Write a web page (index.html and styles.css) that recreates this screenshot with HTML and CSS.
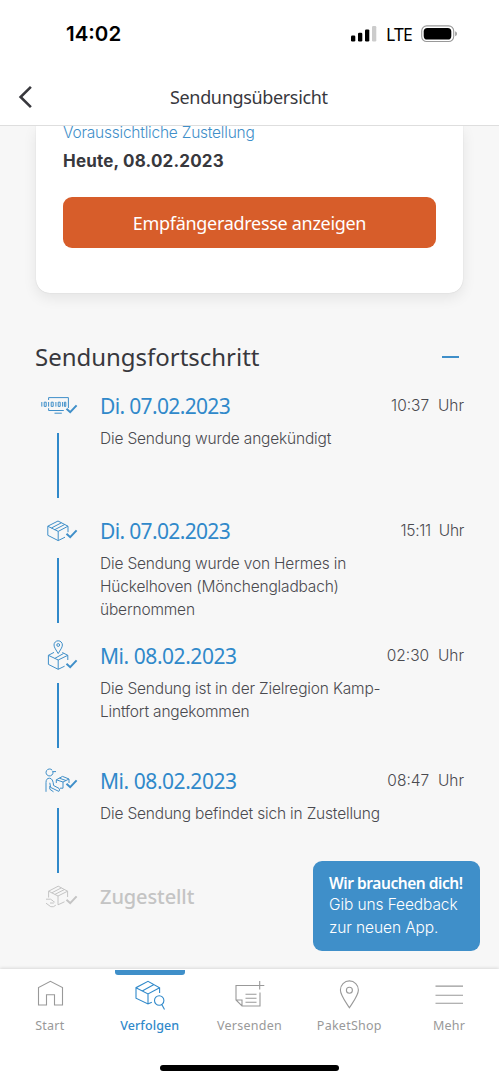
FILE: index.html
```html
<!DOCTYPE html>
<html lang="de">
<head>
    <meta charset="UTF-8">
    <title>Sendungsübersicht</title>
    <link rel="stylesheet" href="styles.css">
</head>
<body>
    <div class="statusbar">
        <span class="clock">14:02</span>
        <div class="status-icons">
            <svg width="26" height="16" viewBox="0 0 26 16">
                <rect x="0" y="9.5" width="4.3" height="6" rx="1.2"/>
                <rect x="7" y="6.7" width="4.3" height="8.8" rx="1.2"/>
                <rect x="14" y="3.4" width="4.3" height="12.1" rx="1.2"/>
                <rect x="21" y="0" width="4.3" height="15.5" rx="1.2" fill="#ccc"/>
            </svg>
            <span class="lte">LTE</span>
            <svg width="37" height="18" viewBox="0 0 37 18">
                <rect x="0.7" y="0.9" width="32" height="15.6" rx="5" fill="none" stroke="#999" stroke-width="1.1"/>
                <rect x="2.7" y="2.9" width="27.6" height="11.6" rx="3.6"/>
                <path d="M34.2 6.2 Q36 7 36 8.8 Q36 10.6 34.2 11.3Z" fill="#999"/>
            </svg>
        </div>
    </div>
    <div class="header">
        <svg class="back" width="14" height="24" viewBox="0 0 14 24"><path d="M12.9 1.8 L2.6 12 L12.9 22.2"/></svg>
        <h1>Sendungsübersicht</h1>
    </div>
    <div class="main">
        <div class="card">
            <p class="label">Voraussichtliche Zustellung</p>
            <p class="date">Heute, 08.02.2023</p>
            <button type="button">Empfängeradresse anzeigen</button>
        </div>
        <div class="section-title">
            <h2>Sendungsfortschritt</h2>
            <span class="minus"></span>
        </div>
        <div class="step">
            <div class="track">
                <svg class="icon" width="40" height="32" viewBox="0 0 40 32">
                    <path d="M9.6 10 V7.6 H29.4 V18 M9.6 18.2 V20.5 H24.8 M15.5 23.2 H22.8"/>
                    <path d="M2.8 12 V16.6 M9.6 12 V16.6 M16.9 12 V16.6 M23.6 12 V16.6 M5.2 12.2 H7.2 V16.4 H5.2Z M12.2 12.2 H14.2 V16.4 H12.2Z M19.2 12.2 H21.2 V16.4 H19.2Z M25.4 12.2 H26.8 V16.4 H25.4Z"/>
                    <path class="check" d="M27.5 18.7 L31.2 22.2 L37.6 15.4"/>
                </svg>
                <span class="line"></span>
            </div>
            <div class="info">
                <div class="row"><h3 class="tight">Di. 07.02.2023</h3><span class="time">10:37&nbsp; Uhr</span></div>
                <p>Die Sendung wurde angekündigt</p>
            </div>
        </div>
        <div class="step">
            <div class="track">
                <svg class="icon" width="40" height="32" viewBox="0 0 40 32">
                    <path d="M29 17.2 V11.2 L19 6 L8.8 11.2 V20.3 L19.2 25.6 L26 22.2 M8.8 11.2 L19.2 16.4 L29 11.2 M19.2 16.4 V25.6 M12.4 13 L22.4 7.8 M15.7 14.7 L25.9 9.4"/>
                    <path class="check" d="M27.5 18.7 L31.2 22.2 L37.6 15.4"/>
                </svg>
                <span class="line"></span>
            </div>
            <div class="info">
                <div class="row"><h3 class="tight">Di. 07.02.2023</h3><span class="time tight">15:11&nbsp; Uhr</span></div>
                <p>Die Sendung wurde von Hermes in<br>Hückelhoven (Mönchengladbach)<br>übernommen</p>
            </div>
        </div>
        <div class="step">
            <div class="track">
                <svg class="icon" width="40" height="32" viewBox="0 0 40 32">
                    <path d="M19.2 13.6 C17.2 10 15 7.4 15 5 A4.2 4.2 0 0 1 23.4 5 C23.4 7.4 21.2 10 19.2 13.6Z"/>
                    <circle cx="19.2" cy="5" r="1.4"/>
                    <path d="M15 12.4 L9.4 15.3 V24.4 L19.2 29.3 L25.6 26.2 M9.4 15.3 L19.2 20 L28.8 15.3 V20 M19.2 20 V29.3 M28.8 15.3 L23.3 12.5 M15.8 18.4 L24.5 13.5"/>
                    <path class="check" d="M27.5 23.7 L31.2 27.2 L37.6 20.4"/>
                </svg>
                <span class="line"></span>
            </div>
            <div class="info">
                <div class="row"><h3>Mi. 08.02.2023</h3><span class="time">02:30&nbsp; Uhr</span></div>
                <p>Die Sendung ist in der Zielregion Kamp-<br>Lintfort angekommen</p>
            </div>
        </div>
        <div class="step last-done">
            <div class="track">
                <svg class="icon" width="40" height="32" viewBox="0 0 40 32">
                    <path d="M14 7 A3.5 3.5 0 1 1 13.2 5.2 M13.2 6.6 H17"/>
                    <path d="M7 26.8 V17.5 Q7 13.2 10.5 13.2 Q14 13.2 14.6 20.5 L20 23.4 Q21.3 25 19.8 26.4 L11.6 22.4 L10.8 17.8 M10.8 21 V24.2 L14.5 26.8"/>
                    <path d="M17.3 14.8 L23.5 11.4 L30 14 L24 17 L17.3 14.8 V18 M24 17 V23.2 H21 M30 14 V18 M20.4 13.2 L27 15.5"/>
                    <path class="check" d="M27.5 18.7 L31.2 22.2 L37.6 15.4"/>
                </svg>
                <span class="line"></span>
            </div>
            <div class="info">
                <div class="row"><h3>Mi. 08.02.2023</h3><span class="time">08:47&nbsp; Uhr</span></div>
                <p>Die Sendung befindet sich in Zustellung</p>
            </div>
        </div>
        <div class="step pending">
            <div class="track">
                <svg class="icon" width="40" height="32" viewBox="0 0 40 32">
                    <path d="M9.6 16.5 V10.2 L19.2 5.2 L28.6 10.2 V16 M9.6 10.2 L19 15 L28.6 10.2 M19 15 V23.8 L25.5 20.8 M12.8 11.8 L22.3 6.9 M15.9 13.4 L25.5 8.5"/>
                    <path d="M7 18.2 H11.5 L14.2 20 Q16.4 21.4 14.5 22 H11 M7 22.2 L11.8 25.7 H14.4 L16.8 24.2"/>
                    <path class="check" d="M27.5 18.7 L31.2 22.2 L37.6 15.4"/>
                </svg>
            </div>
            <h3>Zugestellt</h3>
        </div>
        <div class="feedback">
            <b>Wir brauchen dich!</b>
            <p>Gib uns Feedback<br>zur neuen App.</p>
        </div>
    </div>
    <div class="nav">
        <a>
            <svg width="34" height="34" viewBox="0 0 34 34"><path d="M5.5 29 V11.5 L17.4 5.3 L29.5 11.5 V29 H21.5 V18.8 H13.5 V29Z"/></svg>
            <span>Start</span>
        </a>
        <a class="active">
            <svg width="34" height="34" viewBox="0 0 34 34">
                <path d="M26.6 17 V11.7 L15 5.3 L3 11.7 V22.2 L15 28 L18.8 26.3 M3 11.7 L15 18 L26.6 11.7 M15 18 V28 M9.2 15 L21 8.6"/>
                <circle cx="26.2" cy="24.5" r="4.7"/>
                <path d="M28.8 28.6 L31.5 33.5"/>
            </svg>
            <span>Verfolgen</span>
        </a>
        <a>
            <svg width="34" height="34" viewBox="0 0 34 34">
                <path d="M24.2 9.5 H4 V24 L10 30 H28 V16.5 M4 24 H10 V30 M13.5 18.3 H24.5 M13.5 22.3 H24.5 M13.5 26.3 H24.5 M27.7 5 V13.5 M23 9.5 H32.3"/>
            </svg>
            <span>Versenden</span>
        </a>
        <a>
            <svg width="34" height="34" viewBox="0 0 34 34">
                <path d="M17.4 31.8 C13.4 25.4 8.4 19 8.4 13.9 A9 9 0 0 1 26.4 13.9 C26.4 19 21.4 25.4 17.4 31.8Z"/>
                <circle cx="17.4" cy="14.2" r="3"/>
            </svg>
            <span>PaketShop</span>
        </a>
        <a>
            <svg width="34" height="34" viewBox="0 0 34 34"><path d="M3.5 10.1 H31 M3.5 19.2 H31 M3.5 27.3 H31"/></svg>
            <span>Mehr</span>
        </a>
        <div class="home-bar"></div>
    </div>
</body>
</html>
```
FILE: styles.css
```css
* { margin: 0; padding: 0; box-sizing: border-box; }
body { display: flex; flex-direction: column; width: 499px; height: 1080px; overflow: hidden; background: #f7f7f7; color: #38383d; font-family: "Noto Sans", sans-serif; }
h1, h2, h3 { font-weight: 400; white-space: nowrap; }
svg { display: block; flex: none; }

.statusbar { display: flex; justify-content: space-between; flex: none; height: 69px; padding: 22px 41px 0 66px; background: white; color: black; }
.clock { font: 600 20.5px/24px Inter, sans-serif; }
.status-icons { display: flex; align-items: center; height: 24px; }
.lte { width: 25px; margin: 0 10px 0 9px; font: 400 17.5px/24px "Noto Sans", sans-serif; letter-spacing: -0.8px; }
.header { display: flex; align-items: center; flex: none; height: 57px; padding: 0 171px 0 18px; background: white; border-bottom: 1px solid #dedede; }
.back path { fill: none; stroke: #38383d; stroke-width: 2.6; }
.header h1 { flex: 1; margin-left: 138px; font-size: 18px; letter-spacing: -0.34px; }

.main { flex: 1; position: relative; padding: 0 36px; min-height: 0; }
.card { height: 167px; margin-bottom: 40px; padding: 0 27px; background: white; border-radius: 0 0 14px 14px; box-shadow: 0 5px 14px rgba(0,0,0,0.08), 0 0 1px rgba(0,0,0,0.2); clip-path: inset(0 -30px -30px -30px); }
.card p { white-space: nowrap; }
.label { height: 18px; font: 300 15.5px/14px Inter, sans-serif; letter-spacing: -0.22px; color: #3f8fc9; }
.date { height: 28px; margin-top: 3px; font: 700 17px/28px Inter, sans-serif; letter-spacing: 0.18px; }
.card button { display: block; width: 373px; height: 51px; margin-top: 22px; border: none; border-radius: 9px; background: #d75d2a; color: white; font: 400 18px "Noto Sans", sans-serif; letter-spacing: -0.3px; }
.section-title { display: flex; justify-content: space-between; align-items: center; height: 45px; margin: 0 0 3px -1px; padding: 2px 4px 0 0; }
.section-title h2 { margin-top: -1px; font-size: 24px; letter-spacing: -0.02px; }
.minus { width: 17px; height: 2px; background: #3f8fc9; }

.step { display: flex; height: 125px; padding-top: 9px; }
.track { display: flex; flex-direction: column; flex: none; width: 64px; }
.icon { margin-left: 3px; overflow: visible; fill: none; stroke: #3f8fc9; stroke-width: 1; }
.icon .check { stroke-width: 2; }
.line { flex: none; width: 2.4px; height: 65px; margin: 11px 0 0 21px; background: #3089ca; }
.info { flex: 1; }
.row { display: flex; justify-content: space-between; align-items: center; height: 32px; margin-right: -1px; }
.step h3 { font-size: 21px; line-height: 32px; letter-spacing: -0.45px; color: #3089ca; }
.step h3.tight { letter-spacing: -0.65px; }
.time { font: 300 15.5px/32px Inter, sans-serif; color: #4a4a4f; }
.time.tight { letter-spacing: -0.33px; }
.info p { margin-top: 5px; font: 300 15.5px/23.2px Inter, sans-serif; letter-spacing: -0.18px; white-space: nowrap; color: #4a4a4f; }
.step.last-done { height: 116px; }
.step.pending { height: 50px; }
.pending .icon { stroke: #c4c4c4; }
.step.pending h3 { font-weight: 500; font-size: 20px; letter-spacing: -0.1px; color: #c4c4c4; }

.feedback { position: absolute; left: 313px; top: 735px; width: 167px; height: 90px; padding: 12px 16px; border-radius: 9px; background: #3f8fc9; color: white; white-space: nowrap; }
.feedback b { display: block; font-size: 15.5px; line-height: 20px; font-weight: 600; letter-spacing: -0.45px; }
.feedback p { font: 300 15.5px/23.4px Inter, sans-serif; letter-spacing: -0.1px; }

.nav { display: flex; flex: none; position: relative; height: 111px; background: white; box-shadow: 0 -1px 3px rgba(0,0,0,0.12); }
.nav a { flex: 1; display: flex; flex-direction: column; align-items: center; padding-top: 7px; color: #999; font-size: 12.5px; }
.nav svg { overflow: visible; fill: none; stroke: #999; stroke-width: 1.1; }
.nav span { margin-top: 6px; line-height: 20px; letter-spacing: 0.25px; }
.nav a.active { position: relative; color: #3089ca; font-weight: 500; }
.nav .active span { letter-spacing: 0.1px; }
.nav .active svg { stroke: #3089ca; }
.active::before { content: ""; position: absolute; top: 1px; left: 15px; width: 70px; height: 5px; border-radius: 0 0 3px 3px; background: #3f8fc9; }
.home-bar { position: absolute; left: 160px; bottom: 9px; width: 179px; height: 6px; border-radius: 3px; background: black; }
```
